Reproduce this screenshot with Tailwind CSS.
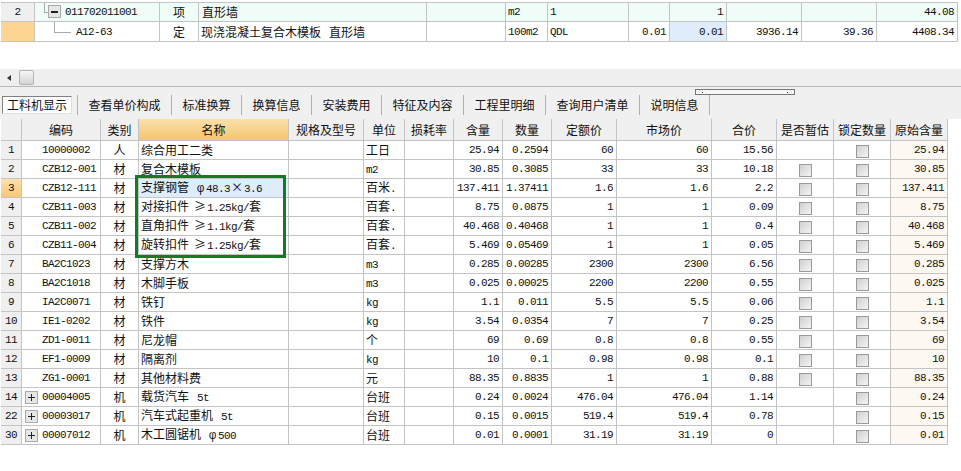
<!DOCTYPE html>
<html lang="en">
<head>
  <meta charset="UTF-8">
  <title>工料机显示</title>
  <script src="https://cdn.jsdelivr.net/npm/@tailwindcss/browser@4"></script>
</head>
<body class="bg-white text-[#111] font-['Noto_Sans_CJK_SC',sans-serif] text-[12px] leading-[14px]">
  <div class="relative w-[961px] h-[471px] overflow-hidden">

    <!-- Upper grid -->
    <div class="h-[69px] pt-[2px] pl-[1px]">
      <table class="table-fixed border-separate border-spacing-0 w-[957px] border-t border-[#c4c4c4]">
        <colgroup>
          <col class="w-[34px]"><col class="w-[125px]"><col class="w-[39px]"><col class="w-[228px]"><col class="w-[79px]"><col class="w-[42px]"><col class="w-[81px]"><col class="w-[41px]"><col class="w-[57px]"><col class="w-[75px]"><col class="w-[75px]"><col class="w-[81px]">
        </colgroup>
        <tbody id="topGrid"></tbody>
      </table>
    </div>

    <!-- Horizontal scrollbar -->
    <div class="flex items-center h-[17px] bg-[#efefef]">
      <span class="ml-[7px] w-0 h-0 border-y-[3px] border-y-transparent border-r-[4px] border-r-[#333]"></span>
      <span class="ml-[8px] w-[15px] h-[15px] rounded-[2px] border border-[#b4b4b4] bg-gradient-to-b from-[#f6f6f6] to-[#d4d4d4]"></span>
    </div>

    <!-- Tab strip -->
    <div class="relative flex items-center h-[33px] pt-[3px] pl-[2px] bg-[#f0f0f0] border-t border-[#b8b8b8]">
      <span class="flex items-center justify-center w-[70px] h-[18px] bg-white border border-t-[#808080] border-l-[#808080] border-r-[#e0e0e0] border-b-[#e0e0e0]">工料机显示</span>
      <div id="tabs" class="flex items-center"></div>
      <div class="absolute left-[695px] top-[2px] w-[100px] h-[6px] bg-[#f7f7f7] border border-[#777]">
        <span class="absolute left-[6px] top-[2px] w-[1px] h-[1px] bg-[#333]"></span>
        <span class="absolute right-[6px] top-[2px] w-[1px] h-[1px] bg-[#333]"></span>
      </div>
    </div>

    <!-- Lower grid -->
    <div class="pl-[1px]">
      <table class="table-fixed border-separate border-spacing-0 w-[947px]">
        <colgroup>
          <col class="w-[21px]"><col class="w-[79px]"><col class="w-[38px]"><col class="w-[150px]"><col class="w-[75px]"><col class="w-[41px]"><col class="w-[49px]"><col class="w-[49px]"><col class="w-[49px]"><col class="w-[65px]"><col class="w-[95px]"><col class="w-[65px]"><col class="w-[57px]"><col class="w-[57px]"><col class="w-[57px]">
        </colgroup>
        <thead><tr id="gridHead"></tr></thead>
        <tbody id="gridBody"></tbody>
      </table>
    </div>

    <!-- Green highlight drawn over the grid -->
    <div class="absolute left-[135px] top-[175px] w-[151px] h-[83px] border-[3px] border-[#137a25]"></div>
  </div>

  <script>
    const MONO = "font-['Liberation_Mono',monospace] text-[11px] tracking-[-0.6px]";
    const CELL = "h-[19px] p-0 border-r border-b border-[#c4c4c4] overflow-hidden whitespace-nowrap";
    const NUM = "h-[19px] p-0 pr-[3px] text-right border-r border-b border-[#c4c4c4] overflow-hidden whitespace-nowrap font-['Liberation_Mono',monospace] text-[11px] tracking-[-0.6px]";
    const TXT = "h-[19px] p-0 pl-[2px] text-left border-r border-b border-[#c4c4c4] overflow-hidden whitespace-nowrap";
    const MID = "h-[19px] p-0 text-center border-r border-b border-[#c4c4c4] overflow-hidden whitespace-nowrap";

    const latin = (s) => `<span class="${MONO}">${s}</span>`;
    const gap = `<span class="inline-block w-[8px]"></span>`;
    const narrowGap = `<span class="inline-block w-[5px]"></span>`;
    const phi = `<span class="inline-block w-[9px] font-['Liberation_Mono',monospace] text-[12px]">&phi;</span>`;
    const times = `<span class="mx-[1px]">&times;</span>`;
    const gte = `<span class="mr-[1px]">&ge;</span>`;
    const checkbox = `<span class="inline-block align-middle w-[13px] h-[13px] border border-[#9a9a9a] bg-gradient-to-br from-[#d0d0d0] to-[#f4f4f4]"></span>`;

    // upper grid
    document.getElementById("topGrid").innerHTML = `
      <tr class="bg-[#effcf7]">
        <td class="${MID} bg-[#efefef] ${MONO}">2</td>
        <td class="${CELL} relative ${MONO} pl-[30px]">
          <span class="absolute left-[9px] top-[-3px] w-[1px] h-[13px] bg-[#aaa]"></span>
          <span class="absolute left-[9px] top-[9px] w-[4px] h-[1px] bg-[#aaa]"></span>
          <span class="absolute left-[13px] top-[2px] flex items-center justify-center w-[13px] h-[13px] border border-[#aaa] bg-[#e6e6e6]"><span class="w-[7px] h-[2px] bg-[#222]"></span></span>
          011702011001
        </td>
        <td class="${MID}">项</td>
        <td class="${TXT} pl-[3px]">直形墙</td>
        <td class="${TXT}"></td>
        <td class="${TXT} ${MONO}">m2</td>
        <td class="${TXT} ${MONO}">1</td>
        <td class="${NUM}"></td>
        <td class="${NUM}">1</td>
        <td class="${NUM}"></td>
        <td class="${NUM}"></td>
        <td class="${NUM}">44.08</td>
      </tr>
      <tr>
        <td class="${MID} !h-[20px] bg-[#fdd592]"></td>
        <td class="${CELL} !h-[20px] relative ${MONO} pl-[41px]">
          <span class="absolute left-[19px] top-[-4px] w-[1px] h-[14px] bg-[#aaa]"></span>
          <span class="absolute left-[19px] top-[10px] w-[17px] h-[1px] bg-[#aaa]"></span>
          A12-63
        </td>
        <td class="${MID} !h-[20px]">定</td>
        <td class="${TXT} !h-[20px]">现浇混凝土复合木模板${gap}直形墙</td>
        <td class="${TXT} !h-[20px]"></td>
        <td class="${TXT} !h-[20px] ${MONO}">100m2</td>
        <td class="${TXT} !h-[20px] ${MONO}">QDL</td>
        <td class="${NUM} !h-[20px]">0.01</td>
        <td class="${NUM} !h-[20px] bg-[#deecfb]">0.01</td>
        <td class="${NUM} !h-[20px]">3936.14</td>
        <td class="${NUM} !h-[20px]">39.36</td>
        <td class="${NUM} !h-[20px]">4408.34</td>
      </tr>`;

    // tabs, each followed by a separator
    const TABS = [["查看单价构成", 94], ["标准换算", 70], ["换算信息", 70], ["安装费用", 70], ["特征及内容", 82], ["工程里明细", 82], ["查询用户清单", 94], ["说明信息", 70]];
    document.getElementById("tabs").innerHTML =
      `<span class="ml-[5px] w-[1px] h-[20px] bg-[#b0b0b0]"></span>` +
      TABS.map(([label, width]) => `<span class="flex items-center justify-center h-[20px] border-r border-[#b0b0b0]" style="width:${width}px">${label}</span>`).join("");

    // lower grid header
    const HEAD = ["", "编码", "类别", "名称", "规格及型号", "单位", "损耗率", "含量", "数量", "定额价", "市场价", "合价", "是否暂估", "锁定数量", "原始含量"];
    document.getElementById("gridHead").innerHTML = HEAD.map((label) => {
      const bg = label === "名称" ? "bg-gradient-to-b from-[#fbe0ab] to-[#f6c56e]" : "bg-[#f0f0f0]";
      return `<th class="h-[22px] p-0 font-normal text-center border-r border-b border-[#c4c4c4] ${bg}">${label}</th>`;
    }).join("");

    // no, code, type, name, unit, qty, amount, quota, market, total, draft checkbox, lock checkbox, plus box
    const ROWS = [
      ["1", "10000002", "人", "综合用工二类", "工日", "25.94", "0.2594", "60", "60", "15.56", false, true],
      ["2", "CZB12-001", "材", "复合木模板", latin("m2"), "30.85", "0.3085", "33", "33", "10.18", true, true],
      ["3", "CZB12-111", "材", `支撑钢管${gap}${phi}${latin("48.3")}${times}${latin("3.6")}`, `百米${latin(".")}`, "137.411", "1.37411", "1.6", "1.6", "2.2", true, true],
      ["4", "CZB11-003", "材", `对接扣件${narrowGap}${gte}${latin("1.25kg/")}套`, `百套${latin(".")}`, "8.75", "0.0875", "1", "1", "0.09", true, true],
      ["5", "CZB11-002", "材", `直角扣件${narrowGap}${gte}${latin("1.1kg/")}套`, `百套${latin(".")}`, "40.468", "0.40468", "1", "1", "0.4", true, true],
      ["6", "CZB11-004", "材", `旋转扣件${narrowGap}${gte}${latin("1.25kg/")}套`, `百套${latin(".")}`, "5.469", "0.05469", "1", "1", "0.05", true, true],
      ["7", "BA2C1023", "材", "支撑方木", latin("m3"), "0.285", "0.00285", "2300", "2300", "6.56", true, true],
      ["8", "BA2C1018", "材", "木脚手板", latin("m3"), "0.025", "0.00025", "2200", "2200", "0.55", true, true],
      ["9", "IA2C0071", "材", "铁钉", latin("kg"), "1.1", "0.011", "5.5", "5.5", "0.06", true, true],
      ["10", "IE1-0202", "材", "铁件", latin("kg"), "3.54", "0.0354", "7", "7", "0.25", true, true],
      ["11", "ZD1-0011", "材", "尼龙帽", "个", "69", "0.69", "0.8", "0.8", "0.55", true, true],
      ["12", "EF1-0009", "材", "隔离剂", latin("kg"), "10", "0.1", "0.98", "0.98", "0.1", true, true],
      ["13", "ZG1-0001", "材", "其他材料费", "元", "88.35", "0.8835", "1", "1", "0.88", true, true],
      ["14", "00004005", "机", `载货汽车${gap}${latin("5t")}`, "台班", "0.24", "0.0024", "476.04", "476.04", "1.14", false, true, true],
      ["22", "00003017", "机", `汽车式起重机${gap}${latin("5t")}`, "台班", "0.15", "0.0015", "519.4", "519.4", "0.78", false, true, true],
      ["30", "00007012", "机", `木工圆锯机${gap}${phi}${latin("500")}`, "台班", "0.01", "0.0001", "31.19", "31.19", "0", false, true, true],
    ];

    document.getElementById("gridBody").innerHTML = ROWS.map((r) => {
      const [no, code, type, name, unit, qty, amount, quota, market, total, draft, lock, plus] = r;
      const selected = no === "3";
      const noBg = selected ? "bg-gradient-to-b from-[#fde0ac] to-[#fbc677]" : "bg-[#efefef]";
      const plusBox = plus ? `<span class="absolute left-[3px] top-[3px] flex items-center justify-center w-[13px] h-[13px] border border-[#aaa] bg-[#e6e6e6] text-[#111]"><span class="relative w-[7px] h-[1px] bg-[#222]"><span class="absolute left-[3px] top-[-3px] w-[1px] h-[7px] bg-[#222]"></span></span></span>` : "";
      return `<tr>
        <td class="${MID} ${MONO} ${noBg}">${no}</td>
        <td class="${CELL} relative pl-[20px] ${MONO}">${plusBox}${code}</td>
        <td class="${MID}">${type}</td>
        <td class="${TXT} ${selected ? "bg-[#deecfb]" : ""}">${name}</td>
        <td class="${TXT}"></td>
        <td class="${TXT}">${unit}</td>
        <td class="${TXT}"></td>
        <td class="${NUM}">${qty}</td>
        <td class="${NUM}">${amount}</td>
        <td class="${NUM}">${quota}</td>
        <td class="${NUM}">${market}</td>
        <td class="${NUM}">${total}</td>
        <td class="${MID}">${draft ? checkbox : ""}</td>
        <td class="${MID}">${lock ? checkbox : ""}</td>
        <td class="${NUM} bg-[#fdf8f2]">${qty}</td>
      </tr>`;
    }).join("");
  </script>
</body>
</html>
